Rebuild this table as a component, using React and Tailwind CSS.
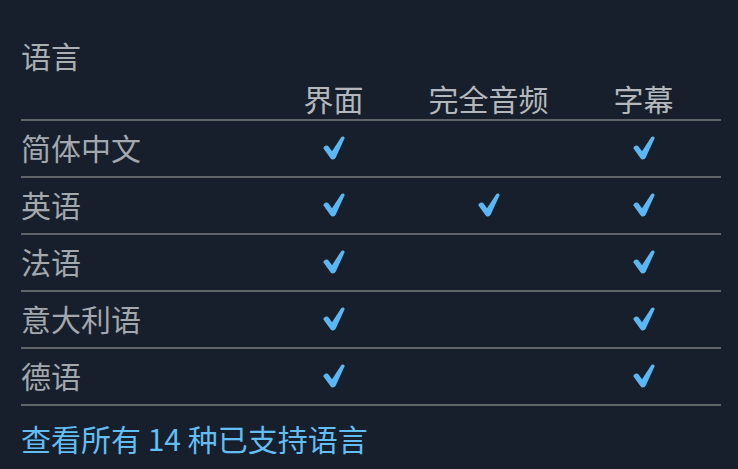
const rows = [
  { name: '简体中文', ui: true, audio: false, subs: true },
  { name: '英语', ui: true, audio: true, subs: true },
  { name: '法语', ui: true, audio: false, subs: true },
  { name: '意大利语', ui: true, audio: false, subs: true },
  { name: '德语', ui: true, audio: false, subs: true },
]

function Check() {
  return (
    <svg width="22" height="24" viewBox="0 0 22 24" className="mx-auto block">
      <path
        d="M0.3 12.2 C1.2 9.2 4.2 8.6 5.8 10.8 L9 15.2 L18 1.4 C19.2 -0.2 21.8 0.3 21.6 2.3 L12.8 21.6 C11.6 24 8.8 24.2 7.5 22.2 Z"
        fill="#5ab7f3"
      />
    </svg>
  )
}

export default function App() {
  return (
    <div
      className="min-h-[469px] w-[738px] bg-[#161f2b] pl-[21px] pr-[17px] pt-[35px]"
      style={{ fontFamily: '"Noto Sans CJK SC", "Noto Sans", sans-serif' }}
    >
      <div className="text-[30px] leading-[40px] text-[#a9aeb3]">语言</div>
      <table className="w-[700px] border-collapse">
        <thead>
          <tr className="border-b-2 border-[#5f6468]">
            <th className="w-[235px] p-0"></th>
            <th className="h-[45px] w-[155px] p-0 pb-[2px] text-center align-bottom text-[30px] font-normal leading-[38px] text-[#b4b8bc]">界面</th>
            <th className="w-[155px] p-0 pb-[2px] text-center align-bottom text-[30px] font-normal leading-[38px] text-[#b4b8bc]">完全音频</th>
            <th className="w-[155px] p-0 pb-[2px] text-center align-bottom text-[30px] font-normal leading-[38px] text-[#b4b8bc]">字幕</th>
          </tr>
        </thead>
        <tbody>
          {rows.map((r) => (
            <tr key={r.name} className="h-[57px] border-b-2 border-[#5f6468]">
              <td className="p-0 pb-[3px] text-[30px] leading-[40px] text-[#a2a8ad]">{r.name}</td>
              <td className="p-0 pb-[1px]">{r.ui && <Check />}</td>
              <td className="p-0 pb-[1px]">{r.audio && <Check />}</td>
              <td className="p-0 pb-[1px]">{r.subs && <Check />}</td>
            </tr>
          ))}
        </tbody>
      </table>
      <a className="mt-[12px] block text-[30px] leading-[40px] text-[#62bdf2]" href="#">
        查看所有 14 种已支持语言
      </a>
    </div>
  )
}
